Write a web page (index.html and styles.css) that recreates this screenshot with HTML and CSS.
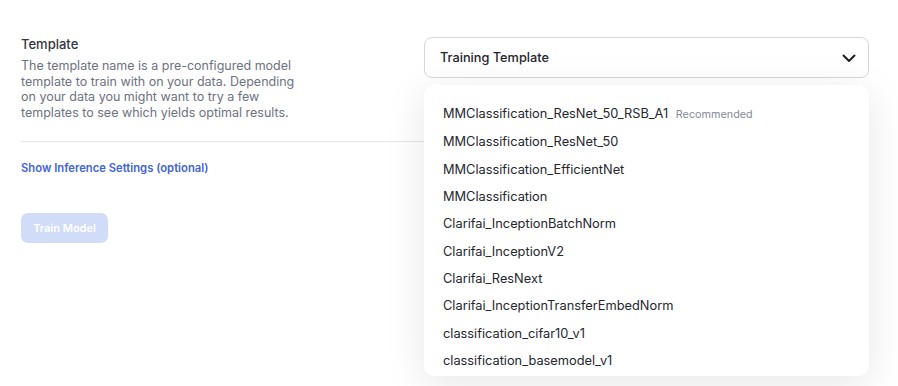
FILE: index.html
```html
<!DOCTYPE html>
<html lang="en">
<head>
    <meta charset="UTF-8">
    <meta name="viewport" content="width=device-width, initial-scale=1.0">
    <title>Train Model</title>
    <link rel="stylesheet" href="styles.css">
</head>
<body>
    <div class="container">
        <div class="info-col">
            <h3 class="field-title">Template</h3>
            <p class="field-desc">The template name is a pre-configured model template to train with on your data. Depending on your data you might want to try a few templates to see which yields optimal results.</p>
            <hr class="divider">
            <a href="#" class="inference-link">Show Inference Settings (optional)</a>
            <button class="train-btn" disabled>Train Model</button>
        </div>

        <div class="select-col">
            <div class="select-box">
                <span>Training Template</span>
                <svg class="chevron" width="16" height="16" viewBox="0 0 16 16" fill="none">
                    <path d="M2.5 5.5L8 11L13.5 5.5" stroke="#1d1f27" stroke-width="2" stroke-linecap="round" stroke-linejoin="round"/>
                </svg>
            </div>
            <ul class="dropdown">
                <li>MMClassification_ResNet_50_RSB_A1 <span class="tag">Recommended</span></li>
                <li>MMClassification_ResNet_50</li>
                <li>MMClassification_EfficientNet</li>
                <li>MMClassification</li>
                <li>Clarifai_InceptionBatchNorm</li>
                <li>Clarifai_InceptionV2</li>
                <li>Clarifai_ResNext</li>
                <li>Clarifai_InceptionTransferEmbedNorm</li>
                <li>classification_cifar10_v1</li>
                <li>classification_basemodel_v1</li>
            </ul>
        </div>
    </div>
</body>
</html>
```

FILE: styles.css
```css
* {
    margin: 0;
    padding: 0;
    box-sizing: border-box;
}

html, body {
    height: 100%;
}

body {
    font-family: Inter, 'Noto Sans', sans-serif;
    background: #fff;
    color: #2b2d36;
}

.container {
    display: grid;
    grid-template-columns: 403px 445px;
    min-height: 100%;
    padding: 36px 0 0 21px;
}

.field-title {
    font-size: 13px;
    font-weight: 500;
    line-height: 16px;
    color: #34363f;
}

.field-desc {
    margin-top: 6px;
    max-width: 285px;
    font-size: 12.5px;
    line-height: 15.5px;
    color: #6e7180;
}

.divider {
    margin-top: 21px;
    border: none;
    border-top: 1px solid #e6e6e8;
}

.inference-link {
    display: block;
    margin-top: 18px;
    font-size: 11.25px;
    font-weight: 600;
    line-height: 16px;
    color: #3f63dd;
    text-decoration: none;
}

.train-btn {
    display: block;
    margin-top: 37px;
    width: 87px;
    height: 30px;
    border: none;
    border-radius: 7px;
    background: #d0dcf8;
    color: #fff;
    font-family: inherit;
    font-size: 11px;
    font-weight: 600;
}

.select-col {
    position: relative;
    padding-top: 1px;
}

.select-box {
    display: flex;
    align-items: center;
    justify-content: space-between;
    height: 41px;
    padding: 0 11px 0 15px;
    border: 1px solid #d5d6da;
    border-radius: 8px;
    font-size: 12.75px;
    font-weight: 500;
    color: #24262e;
}

.dropdown {
    position: absolute;
    top: 49px;
    left: 0;
    width: 445px;
    height: 291px;
    overflow: hidden;
    list-style: none;
    padding: 15px 19px 0;
    background: #fff;
    border-radius: 10px;
    box-shadow: 0 8px 40px rgba(0, 0, 0, 0.1);
}

.dropdown li {
    font-size: 12.8px;
    line-height: 27.35px;
    color: #24262e;
    white-space: nowrap;
}

.tag {
    margin-left: 4px;
    font-size: 10.8px;
    color: #878a96;
}
```
